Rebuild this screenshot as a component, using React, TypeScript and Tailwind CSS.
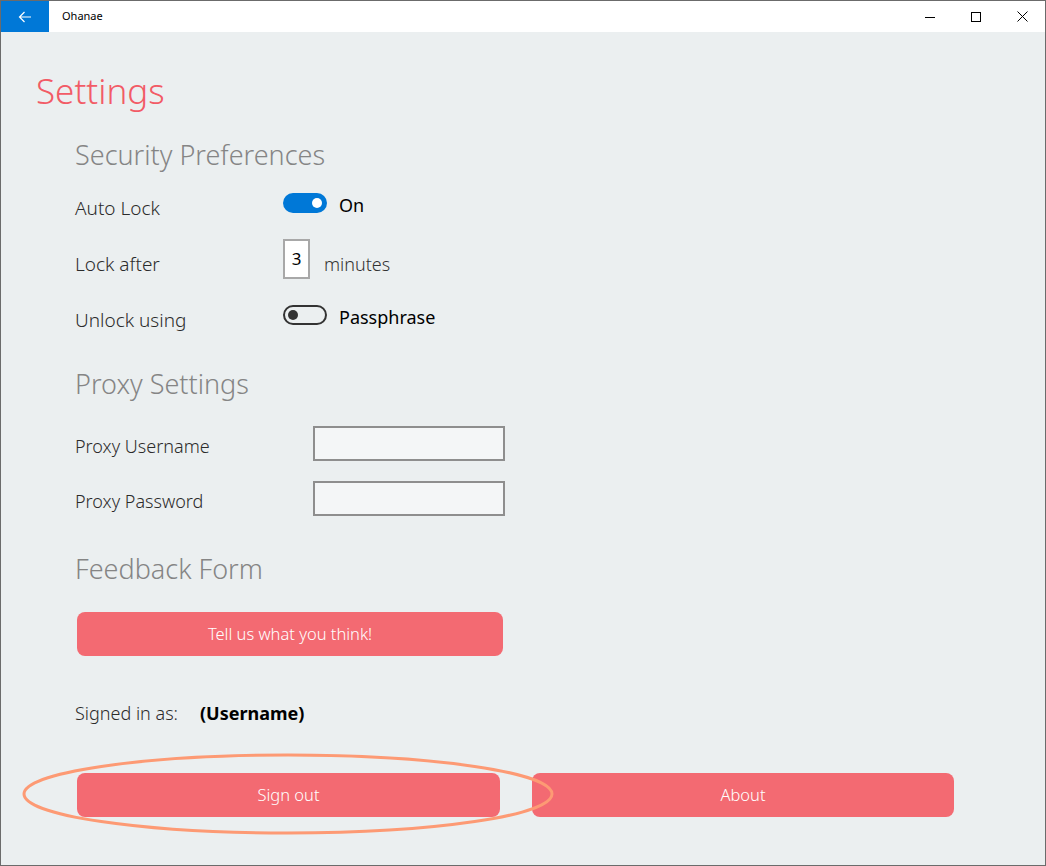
import React from "react";

const font = { fontFamily: '"Noto Sans", "Open Sans", sans-serif' };

function Toggle({ on }: { on: boolean }) {
  if (on) {
    return (
      <div className="flex h-[20px] w-[44px] items-center justify-end rounded-full bg-[#0078d7] pr-[5px]">
        <div className="h-[10px] w-[10px] rounded-full bg-white" />
      </div>
    );
  }
  return (
    <div className="flex h-[20px] w-[44px] items-center rounded-full border-2 border-[#333] pl-[3px]">
      <div className="h-[10px] w-[10px] rounded-full bg-[#333]" />
    </div>
  );
}

function Row({ label, children }: { label: string; children: React.ReactNode }) {
  return (
    <div className="flex h-[56px] items-center">
      <div className="w-[208px] pt-[10px] text-[19px] font-light text-[#2b2b2b]">{label}</div>
      {children}
    </div>
  );
}

function Heading({ children }: { children: React.ReactNode }) {
  return <div className="text-[27px] font-light leading-[36px] text-[#858585]">{children}</div>;
}

function PinkButton({ label, w }: { label: string; w: string }) {
  return (
    <button className={`flex h-[44px] items-center justify-center rounded-[8px] bg-[#f36a72] text-[16.5px] font-light text-white ${w}`}>
      {label}
    </button>
  );
}

export default function App() {
  return (
    <div style={font} className="flex h-[866px] w-[1046px] flex-col border border-[#6b6b6b] bg-[#ebeff0]">
      {/* title bar */}
      <div className="flex h-[31px] items-center bg-white">
        <div className="flex h-full w-[48px] items-center justify-center bg-[#0078d7]">
          <svg width="14" height="14" viewBox="0 0 14 14" fill="none" stroke="white" strokeWidth="1.2">
            <path d="M13 7H1.5M6.5 2L1.5 7l5 5" />
          </svg>
        </div>
        <div className="ml-[13px] text-[11px] text-black">Ohanae</div>
        <div className="ml-auto flex h-full items-center">
          <div className="flex w-[46px] justify-center">
            <svg width="10" height="10" viewBox="0 0 10 10" stroke="black" strokeWidth="1">
              <path d="M0 5.5h10" />
            </svg>
          </div>
          <div className="flex w-[46px] justify-center">
            <svg width="10" height="10" viewBox="0 0 10 10" fill="none" stroke="black" strokeWidth="1">
              <rect x="0.5" y="0.5" width="9" height="9" />
            </svg>
          </div>
          <div className="flex w-[46px] justify-center">
            <svg width="11" height="11" viewBox="0 0 11 11" stroke="black" strokeWidth="1">
              <path d="M0.5 0.5l10 10M10.5 0.5l-10 10" />
            </svg>
          </div>
        </div>
      </div>

      <div className="relative flex-1">
        <div className="pl-[35px] pt-[33px] text-[35px] font-light leading-[52px] text-[#f25b66]">Settings</div>

        <div className="pl-[74px]">
          <div className="mt-[20px]">
            <Heading>Security Preferences</Heading>
          </div>
          <div className="mt-[2px]">
            <Row label="Auto Lock">
              <div className="flex items-center">
                <Toggle on />
                <span className="ml-[12px] pt-[4px] text-[18px] text-black">On</span>
              </div>
            </Row>
            <Row label="Lock after">
              <div className="flex items-center">
                <div className="flex h-[40px] w-[27px] items-center justify-center border-2 border-[#a8a8a8] bg-white text-[17px] text-black">
                  3
                </div>
                <span className="ml-[14px] pt-[10px] text-[18px] font-light text-[#333]">minutes</span>
              </div>
            </Row>
            <Row label="Unlock using">
              <div className="flex items-center">
                <Toggle on={false} />
                <span className="ml-[12px] pt-[4px] text-[18px] text-black">Passphrase</span>
              </div>
            </Row>
          </div>

          <div className="mt-[23px]">
            <Heading>Proxy Settings</Heading>
          </div>
          <div className="mt-[24px] flex flex-col gap-[20px]">
            {["Proxy Username", "Proxy Password"].map((l) => (
              <div key={l} className="flex h-[35px] items-center">
                <div className="w-[238px] pt-[6px] text-[18px] font-light text-[#2b2b2b]">{l}</div>
                <div className="h-[35px] w-[192px] border-2 border-[#8e8e8e] bg-[#f4f6f7]" />
              </div>
            ))}
          </div>

          <div className="mt-[35px]">
            <Heading>Feedback Form</Heading>
          </div>
          <div className="ml-[2px] mt-[25px]">
            <PinkButton label="Tell us what you think!" w="w-[426px]" />
          </div>

          <div className="mt-[44px] flex items-center text-[18px]">
            <span className="w-[125px] font-light text-[#2b2b2b]">Signed in as:</span>
            <span className="font-bold text-black">(Username)</span>
          </div>

          <div className="ml-[2px] mt-[46px] flex gap-[32px]">
            <PinkButton label="Sign out" w="w-[423px]" />
            <PinkButton label="About" w="w-[422px]" />
          </div>
        </div>

        {/* highlight ellipse */}
        <svg className="absolute left-[21px] top-[721px]" width="532" height="82" viewBox="0 0 532 82" fill="none">
          <ellipse cx="266" cy="41" rx="264" ry="39" stroke="#fd9a74" strokeWidth="3" />
        </svg>
      </div>
    </div>
  );
}
